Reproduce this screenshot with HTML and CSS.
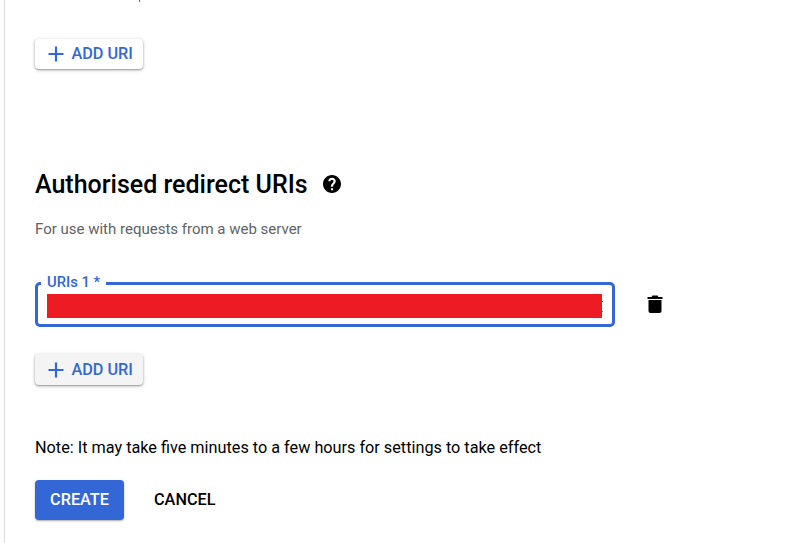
FILE: index.html
```
<!DOCTYPE html>
<html lang="en-GB">
<head>
<meta charset="utf-8">
<title>Create OAuth client ID</title>
<link rel="stylesheet" href="styles.css">
</head>
<body>
<main class="panel">
  <div class="clipped"></div>
  <button class="add"><svg class="plus" viewBox="0 0 16 16"><path d="M8 .5v15M.5 8h15"/></svg><span>ADD URI</span></button>
  <div class="heading">
    <h2>Authorised redirect URIs</h2>
    <svg class="help" viewBox="2 2 20 20"><path d="M12 2C6.480 2 2 6.480 2 12s4.480 10 10 10 10-4.480 10-10S17.520 2 12 2zm1.200 17h-2.400v-2.400h2.400zm2.100-7.750-.9.920C13.600 12.900 13.200 13.500 13.200 15h-2.400v-.5c0-1.100.4-2.100 1.100-2.830l1.240-1.260c.37-.36.59-.86.59-1.410 0-1-.8-1.800-1.800-1.800S10.200 8 10.200 9H7.800c0-2.210 1.890-4 4.200-4s4.200 1.790 4.200 4c0 .88-.36 1.680-.9 2.250z"/></svg>
  </div>
  <p class="hint">For use with requests from a web server</p>
  <div class="row">
    <div class="field">
      <span class="label">URIs 1 *</span>
      <div class="value"></div>
    </div>
    <svg class="trash" viewBox="0 0 16 18"><path d="M.5 2h4l1-1.500h5l1 1.500h4v2H.5zM1.500 5h13v11q0 2-2 2h-9q-2 0-2-2z"/></svg>
  </div>
  <button class="add hovered"><svg class="plus" viewBox="0 0 16 16"><path d="M8 .5v15M.5 8h15"/></svg><span>ADD URI</span></button>
  <p class="note">Note: It may take five minutes to a few hours for settings to take effect</p>
  <div class="actions">
    <button class="create">CREATE</button>
    <button class="cancel">CANCEL</button>
  </div>
</main>
</body>
</html>
```
FILE: styles.css
```
* { box-sizing: border-box; }
body { margin: 0; background: #fff; color: #000; font-family: Roboto, sans-serif; overflow: hidden; }
h2, p { margin: 0; font-weight: 400; }
button { border: 0; background: none; padding: 0; font: 500 16.250px/20px Roboto, sans-serif; color: #000; }
svg { display: block; flex: none; }
.panel { height: 543px; margin-left: 4px; border-left: 1px solid #dadce0; padding-left: 30px; }
.clipped { width: 1px; height: 2px; margin: 0 0 37px 104px; background: #68625f; }
.add { display: flex; align-items: center; width: 108px; height: 30px; padding-left: 13px; border-radius: 4px; color: #3367d6; background: #fff; box-shadow: 0 1px 2px rgba(0,0,0,.36), 0 1px 5px rgba(0,0,0,.14); }
.add span { margin-left: 7.400px; white-space: nowrap; }
.hovered { height: 31px; margin-top: 27px; background: #f4f4f4; }
.plus { width: 16px; height: 16px; fill: none; stroke: #3367d6; stroke-width: 2.200; }
.heading { display: flex; align-items: center; height: 30px; margin-top: 101px; }
.heading h2 { width: 288.400px; font-size: 25px; line-height: 30px; font-weight: 500; white-space: nowrap; }
.help { width: 18px; height: 18px; margin-bottom: 2px; }
.hint { margin-top: 19px; font-size: 15px; line-height: 20px; color: #5f6368; }
.row { display: flex; align-items: center; margin-top: 43px; }
.field { position: relative; width: 580px; height: 45px; padding: 9px; border: 3px solid #3367d6; border-radius: 5px; }
.label { position: absolute; left: 3px; top: -13px; width: 65px; padding-left: 6px; background: #fff; color: #3367d6; font-size: 14.800px; line-height: 20px; font-weight: 500; white-space: nowrap; }
.value { position: relative; width: 555px; height: 24px; background: #ed1c24; }
.value::after { content: ""; position: absolute; left: 555px; top: 7px; width: 1px; height: 9px; border: solid #777; border-width: 1px 0; }
.trash { width: 16px; height: 18px; margin: 0 0 2px 32px; }
.note { margin-top: 53px; font-size: 16.240px; line-height: 20px; }
.actions { display: flex; margin-top: 22px; }
.create { width: 89px; height: 40px; border-radius: 4px; background: #3367d6; color: #fff; box-shadow: 0 1px 2px rgba(0,0,0,.35); }
.cancel { margin-left: 30px; }
```
